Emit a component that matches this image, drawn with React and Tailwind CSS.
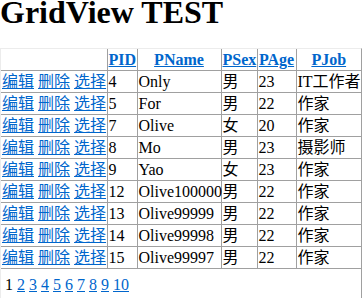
const rows = [
  { id: 4, name: "Only", sex: "男", age: 23, job: "IT工作者" },
  { id: 5, name: "For", sex: "男", age: 22, job: "作家" },
  { id: 7, name: "Olive", sex: "女", age: 20, job: "作家" },
  { id: 8, name: "Mo", sex: "男", age: 23, job: "摄影师" },
  { id: 9, name: "Yao", sex: "女", age: 23, job: "作家" },
  { id: 12, name: "Olive100000", sex: "男", age: 22, job: "作家" },
  { id: 13, name: "Olive99999", sex: "男", age: 22, job: "作家" },
  { id: 14, name: "Olive99998", sex: "男", age: 22, job: "作家" },
  { id: 15, name: "Olive99997", sex: "男", age: 22, job: "作家" },
];

const cell = "border border-[#a0a0a0] px-px py-px leading-[19px] whitespace-nowrap";
const link = "text-[#0066cc] underline";

export default function App() {
  return (
    <div className="bg-white text-black text-[16px] font-['Liberation_Serif','Noto_Sans_CJK_SC',serif]">
      <h1 className="text-[32px] font-bold leading-[22px] pt-px">GridView TEST</h1>
      <div className="mt-[25px] w-[362px] border border-t-[#ececec] border-l-[#ececec] border-r-[#a0a0a0] border-b-[#a0a0a0]">
        <table className="border-collapse border-hidden table-fixed w-[360px]">
          <colgroup>
            <col className="w-[106px]" />
            <col className="w-[30px]" />
            <col className="w-[84px]" />
            <col className="w-[36px]" />
            <col className="w-[39px]" />
            <col className="w-[65px]" />
          </colgroup>
          <thead>
            <tr className="font-bold">
              <th className={cell}>&nbsp;</th>
              {["PID", "PName", "PSex", "PAge", "PJob"].map((h) => (
                <th key={h} className={cell + " text-center"}>
                  <a className={link} href="#">{h}</a>
                </th>
              ))}
            </tr>
          </thead>
          <tbody>
            {rows.map((r) => (
              <tr key={r.id}>
                <td className={cell}>
                  <a className={link} href="#">编辑</a> <a className={link} href="#">删除</a>{" "}
                  <a className={link} href="#">选择</a>
                </td>
                <td className={cell}>{r.id}</td>
                <td className={cell}>{r.name}</td>
                <td className={cell}>{r.sex}</td>
                <td className={cell}>{r.age}</td>
                <td className={cell}>{r.job}</td>
              </tr>
            ))}
            <tr>
              <td colSpan={6} className="border border-[#a0a0a0] px-px pt-[3px] pb-[4px]">
                <table className="border-separate border-spacing-[2px]">
                  <tbody>
                    <tr>
                      <td className="p-px leading-[19px]">1</td>
                      {[2, 3, 4, 5, 6, 7, 8, 9, 10].map((n) => (
                        <td key={n} className="p-px leading-[19px]">
                          <a className={link} href="#">{n}</a>
                        </td>
                      ))}
                    </tr>
                  </tbody>
                </table>
              </td>
            </tr>
          </tbody>
        </table>
      </div>
    </div>
  );
}
